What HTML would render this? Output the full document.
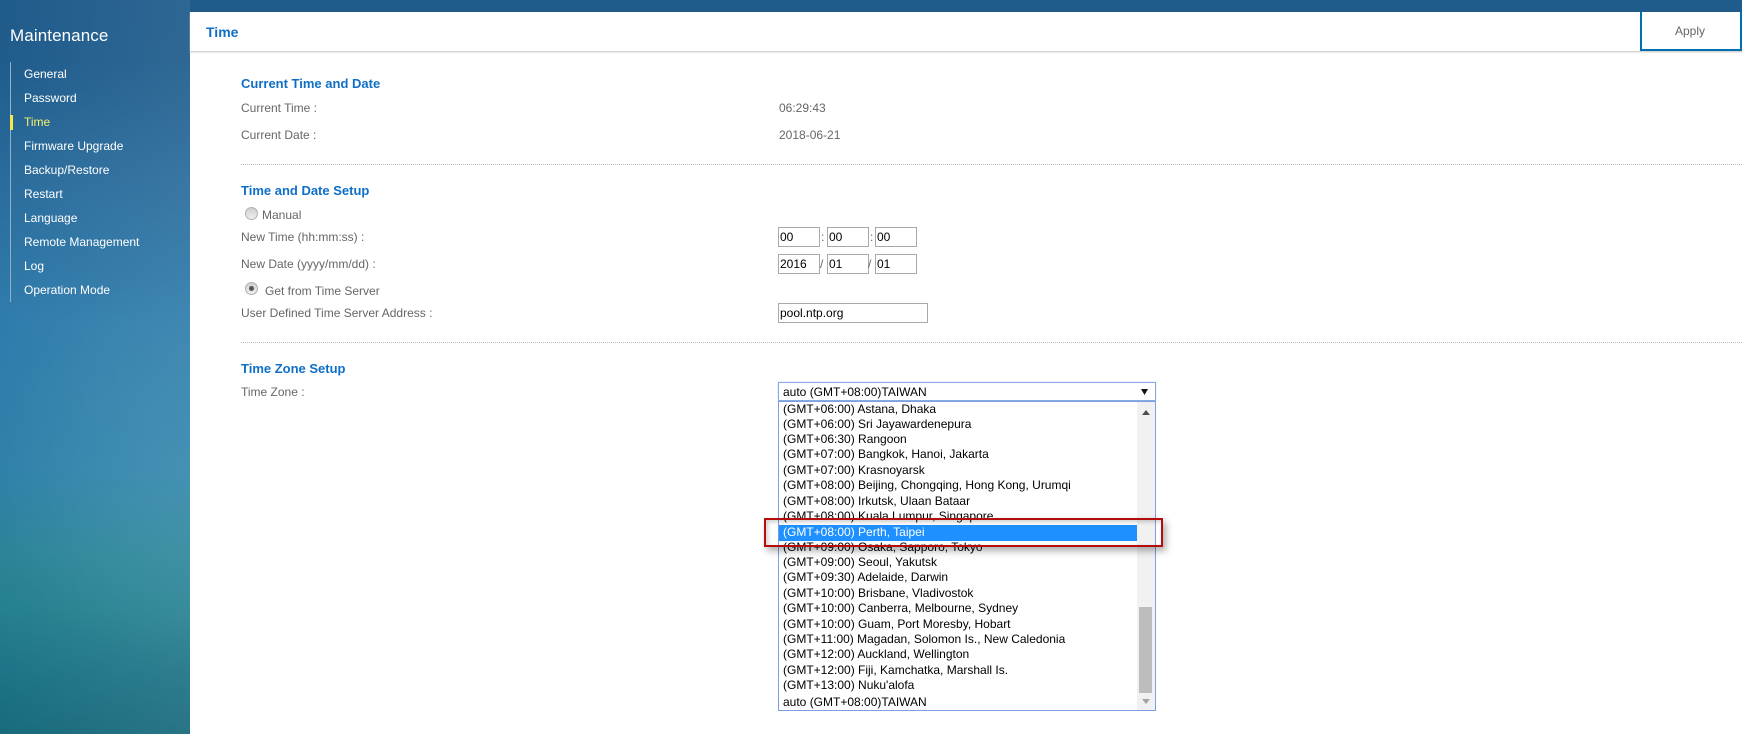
<!DOCTYPE html>
<html><head><meta charset="utf-8"><title>Time</title>
<style>
html,body{margin:0;padding:0;width:1742px;height:734px;overflow:hidden;background:#fff;font-family:"Liberation Sans",Arial,sans-serif;font-size:12px;color:#666}
.a{position:absolute;white-space:nowrap}
#bg{position:absolute;left:0;top:0;width:190px;height:734px;background:
radial-gradient(ellipse 200px 200px at 190px 470px,rgba(80,160,185,.35),rgba(80,160,185,0)),
linear-gradient(90deg,rgba(255,255,255,0) 0,rgba(255,255,255,.07) 100%),
linear-gradient(180deg,#1f5b8b 0,#1f5c8c 60px,#2a6c9c 180px,#2f7cac 320px,#2f80aa 470px,#2c8498 550px,#25808f 610px,#1d7286 680px,#186a7c 734px)}
#top{position:absolute;left:190px;top:0;width:1552px;height:12px;background:#1f5b8b}
#head{position:absolute;left:190px;top:12px;width:1552px;height:39px;background:#fff;border-bottom:1px solid #d4d4d4;box-shadow:0 1px 1px #e8e8e8}
.m{position:absolute;left:24px;color:#fff;font-size:12px;line-height:16px;white-space:nowrap}
.s{position:absolute;left:241px;color:#0f6fc6;font-size:13px;font-weight:bold;line-height:16px;white-space:nowrap}
.l{position:absolute;color:#666;font-size:12px;line-height:14px;white-space:nowrap}
.i{position:absolute;box-sizing:border-box;border:1px solid #a9a9a9;height:20px;background:#fff;color:#000;font-size:12px;line-height:18px;padding-left:1px;white-space:nowrap}
.d{position:absolute;left:241px;width:1501px;height:0;border-top:1px dotted #bbb}
.r{position:absolute;box-sizing:border-box;width:13px;height:13px;border-radius:50%;border:1px solid #b0b0b0;background:linear-gradient(#cfcfcf,#efefef)}
.o{position:absolute;left:783px;color:#000;font-size:12px;line-height:15px;white-space:nowrap}
</style></head><body>
<div id="bg"></div><div id="top"></div><div id="head"></div>

<div class="a" style="left:10px;top:26px;color:#fff;font-size:17px;line-height:20px;letter-spacing:.1px">Maintenance</div>
<div class="a" style="left:10px;top:62px;width:1px;height:240px;background:#8fb0c8"></div>
<div class="a" style="left:10px;top:115px;width:3px;height:15px;background:#f5e94a"></div>
<div class="m" style="top:66px">General</div>
<div class="m" style="top:90px">Password</div>
<div class="m" style="top:114px;color:#f6f06a">Time</div>
<div class="m" style="top:138px">Firmware Upgrade</div>
<div class="m" style="top:162px">Backup/Restore</div>
<div class="m" style="top:186px">Restart</div>
<div class="m" style="top:210px">Language</div>
<div class="m" style="top:234px">Remote Management</div>
<div class="m" style="top:258px">Log</div>
<div class="m" style="top:282px">Operation Mode</div>

<div class="a" style="left:206px;top:24px;color:#0f6fc6;font-size:14px;font-weight:bold;line-height:17px">Time</div>
<div class="a" style="left:1640px;top:12px;width:102px;height:39px;box-sizing:border-box;border:2px solid #0070b0;border-top:0;background:#fff;color:#666;font-size:12px;line-height:38px;text-align:center;padding-right:2px">Apply</div>

<div class="s" style="top:76px">Current Time and Date</div>
<div class="l" style="left:241px;top:101px">Current Time :</div>
<div class="l" style="left:779px;top:101px">06:29:43</div>
<div class="l" style="left:241px;top:128px">Current Date :</div>
<div class="l" style="left:779px;top:128px">2018-06-21</div>
<div class="d" style="top:164px"></div>

<div class="s" style="top:183px">Time and Date Setup</div>
<div class="r" style="left:245px;top:207px"></div>
<div class="l" style="left:262px;top:208px">Manual</div>
<div class="l" style="left:241px;top:230px">New Time (hh:mm:ss) :</div>
<div class="i" style="left:778px;top:227px;width:42px">00</div>
<div class="l" style="left:821px;top:230px">:</div>
<div class="i" style="left:827px;top:227px;width:42px">00</div>
<div class="l" style="left:870px;top:230px">:</div>
<div class="i" style="left:875px;top:227px;width:42px">00</div>
<div class="l" style="left:241px;top:257px">New Date (yyyy/mm/dd) :</div>
<div class="i" style="left:778px;top:254px;width:42px">2016</div>
<div class="l" style="left:820px;top:257px">/</div>
<div class="i" style="left:827px;top:254px;width:42px">01</div>
<div class="l" style="left:868px;top:257px">/</div>
<div class="i" style="left:875px;top:254px;width:42px">01</div>
<div class="r" style="left:245px;top:282px"></div>
<div class="a" style="left:249px;top:286px;width:5px;height:5px;border-radius:50%;background:#555"></div>
<div class="l" style="left:265px;top:284px">Get from Time Server</div>
<div class="l" style="left:241px;top:306px">User Defined Time Server Address :</div>
<div class="i" style="left:778px;top:303px;width:150px">pool.ntp.org</div>
<div class="d" style="top:342px"></div>

<div class="s" style="top:361px">Time Zone Setup</div>
<div class="l" style="left:241px;top:385px">Time Zone :</div>

<div class="a" style="left:778px;top:382px;width:378px;height:19px;box-sizing:border-box;border:1px solid #8aa9e2;box-shadow:0 0 1px #a9c2ee;background:#fff"></div>
<div class="o" style="top:385px">auto (GMT+08:00)TAIWAN</div>
<svg class="a" style="left:1140px;top:388px" width="10" height="8"><path d="M1 1H8L4.5 7Z" fill="#111"/></svg>

<div class="a" style="left:778px;top:401px;width:378px;height:310px;box-sizing:border-box;border:1px solid #7b9fe0;background:#fff"></div>
<div class="a" style="left:1137px;top:402px;width:18px;height:308px;background:#f1f1f1"></div>
<div class="a" style="left:1139px;top:607px;width:13px;height:86px;background:#bdbdbd"></div>
<svg class="a" style="left:1141px;top:409px" width="10" height="7"><path d="M1 6H9L5 1Z" fill="#505050"/></svg>
<svg class="a" style="left:1141px;top:698px" width="10" height="7"><path d="M1 1H9L5 6Z" fill="#a3a3a3"/></svg>

<div class="o" style="top:402px">(GMT+06:00) Astana, Dhaka</div>
<div class="o" style="top:417px">(GMT+06:00) Sri Jayawardenepura</div>
<div class="o" style="top:432px">(GMT+06:30) Rangoon</div>
<div class="o" style="top:447px">(GMT+07:00) Bangkok, Hanoi, Jakarta</div>
<div class="o" style="top:463px">(GMT+07:00) Krasnoyarsk</div>
<div class="o" style="top:478px">(GMT+08:00) Beijing, Chongqing, Hong Kong, Urumqi</div>
<div class="o" style="top:494px">(GMT+08:00) Irkutsk, Ulaan Bataar</div>
<div class="o" style="top:509px">(GMT+08:00) Kuala Lumpur, Singapore</div>
<div class="a" style="left:779px;top:525px;width:358px;height:16px;background:#1e90ff"></div>
<div class="o" style="top:525px;color:#fff">(GMT+08:00) Perth, Taipei</div>
<div class="o" style="top:540px">(GMT+09:00) Osaka, Sapporo, Tokyo</div>
<div class="o" style="top:555px">(GMT+09:00) Seoul, Yakutsk</div>
<div class="o" style="top:570px">(GMT+09:30) Adelaide, Darwin</div>
<div class="o" style="top:586px">(GMT+10:00) Brisbane, Vladivostok</div>
<div class="o" style="top:601px">(GMT+10:00) Canberra, Melbourne, Sydney</div>
<div class="o" style="top:617px">(GMT+10:00) Guam, Port Moresby, Hobart</div>
<div class="o" style="top:632px">(GMT+11:00) Magadan, Solomon Is., New Caledonia</div>
<div class="o" style="top:647px">(GMT+12:00) Auckland, Wellington</div>
<div class="o" style="top:663px">(GMT+12:00) Fiji, Kamchatka, Marshall Is.</div>
<div class="o" style="top:678px">(GMT+13:00) Nuku'alofa</div>
<div class="o" style="top:695px">auto (GMT+08:00)TAIWAN</div>

<div class="a" style="left:764px;top:518px;width:399px;height:29px;box-sizing:border-box;border:2px solid #b30d0d;box-shadow:3px 4px 7px rgba(0,0,0,.32),inset 2px 2px 4px rgba(0,0,0,.2)"></div>
</body></html>
